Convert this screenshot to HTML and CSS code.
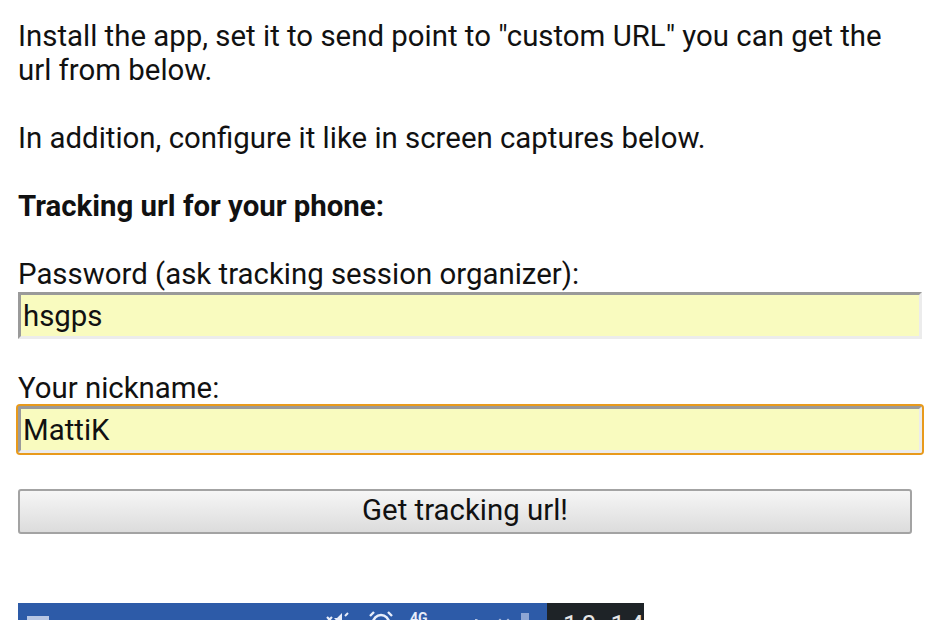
FILE: index.html
```html
<!DOCTYPE html>
<html>
<head>
<meta charset="utf-8">
<link rel="stylesheet" href="styles.css">
</head>
<body>
<div class="page">
  <p class="para">Install the app, set it to send point to "custom URL" you can get the url from below.</p>
  <p class="para">In addition, configure it like in screen captures below.</p>
  <h3 class="heading">Tracking url for your phone:</h3>
  <form class="form">
    <label class="label" for="pw">Password (ask tracking session organizer):</label>
    <input class="field" id="pw" type="text" value="hsgps">
    <label class="label label-gap" for="nick">Your nickname:</label>
    <input class="field field-focus" id="nick" type="text" value="MattiK">
    <button class="btn" type="button">Get tracking url!</button>
  </form>
  <div class="capture">
    <div class="capture-blue">
      <span class="ic ic-menu"></span>
      <svg class="ic-mute" width="24" height="16" viewBox="0 0 24 16"><path d="M2 6 L7 11 M7 6 L2 11" stroke="#e8eefa" stroke-width="2.2" fill="none"/><path d="M9 7 h3 l5 -5 v14" fill="#e8eefa"/><path d="M20 5 l3 -3" stroke="#e8eefa" stroke-width="2" fill="none"/></svg>
      <svg class="ic-alarm" width="26" height="16" viewBox="0 0 26 16"><path d="M2 7 l4 -4 M24 7 l-4 -4" stroke="#e8eefa" stroke-width="2.4" fill="none"/><circle cx="13" cy="14" r="8" stroke="#e8eefa" stroke-width="2.6" fill="none"/></svg>
      <span class="ic-4g">4G</span>
      <svg class="ic-sig" width="60" height="16" viewBox="0 0 60 16"><rect x="6" y="8" width="2.5" height="8" fill="#b4c3e2"/><path d="M28 12 l3 -3 l3 3 M36 12 l3 -3 l3 3" stroke="#b4c3e2" stroke-width="2" fill="none"/><rect x="52" y="2" width="8" height="14" fill="#8ea6d4"/></svg>
    </div>
    <div class="capture-dark"><span class="clock">10:14</span></div>
  </div>
</div>
</body>
</html>
```

FILE: styles.css
```css
html, body {
  margin: 0;
  padding: 0;
  background: #ffffff;
}

.page {
  padding: 19px 8px 0 18px;
  font-family: Roboto, "Noto Sans", sans-serif;
  font-size: 29.4px;
  line-height: 34px;
  color: #111111;
}

.para {
  margin: 0 0 34px 0;
  max-width: 870px;
}

.heading {
  margin: 0 0 34px 0;
  font-size: 29.4px;
  font-weight: 700;
  line-height: 34px;
}

.form {
  display: flex;
  flex-direction: column;
  align-items: flex-start;
}

.label {
  display: block;
  line-height: 34px;
}

.label-gap {
  margin-top: 32px;
}

.field {
  box-sizing: border-box;
  width: 904px;
  height: 47px;
  margin: 1px 0 0 0;
  padding: 0 0 0 2px;
  border: 3px solid;
  border-color: #9a9a9a #ececec #ececec #9a9a9a;
  background: #f9fbbf;
  font-family: Roboto, "Noto Sans", sans-serif;
  font-size: 29.4px;
  color: #111111;
  outline: none;
}

.field-focus {
  box-shadow: 0 0 0 2px #e89a1c;
  border-radius: 2px;
}

.btn {
  box-sizing: border-box;
  width: 894px;
  height: 45px;
  margin-top: 36px;
  border: 2px solid #a3a3a3;
  border-radius: 3px;
  background: linear-gradient(#f6f6f6, #dcdcdc);
  font-family: Roboto, "Noto Sans", sans-serif;
  font-size: 29.4px;
  color: #111111;
  padding: 0 0 3px 0;
}

.capture {
  display: flex;
  width: 626px;
  height: 40px;
  margin-top: 69px;
}

.capture-blue {
  flex: 1;
  position: relative;
  background: #2d5ba8;
}

.capture-dark {
  width: 97px;
  background: #1e2327;
  color: #e6e6e6;
  font-family: Roboto, "Noto Sans", sans-serif;
  font-size: 26px;
  line-height: 26px;
}

.clock {
  display: block;
  padding: 9px 0 0 16px;
  letter-spacing: 4px;
}

.ic {
  position: absolute;
}

.ic-menu {
  left: 9px;
  top: 13px;
  width: 22px;
  height: 14px;
  background: #b7c6e4;
}

.ic-mute {
  position: absolute;
  left: 307px;
  top: 8px;
}

.ic-alarm {
  position: absolute;
  left: 350px;
  top: 6px;
}

.ic-4g {
  position: absolute;
  left: 392px;
  top: 8px;
  font-size: 14px;
  line-height: 14px;
  color: #e8eefa;
  font-weight: 700;
}

.ic-sig {
  position: absolute;
  left: 451px;
  top: 8px;
}
```
